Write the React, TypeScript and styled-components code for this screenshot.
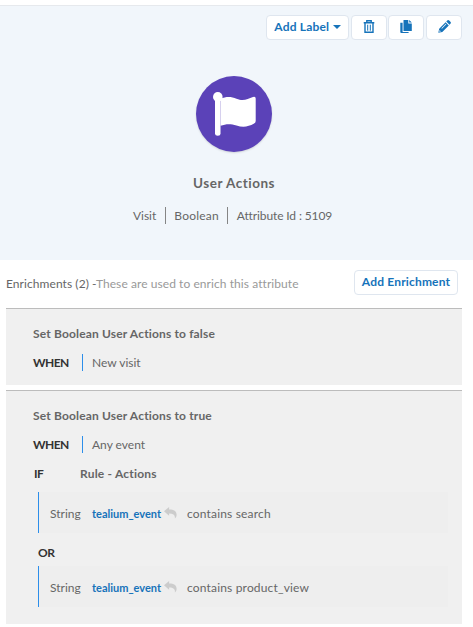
import React from "react";
import styled, { createGlobalStyle } from "styled-components";

const GlobalStyle = createGlobalStyle`
  * { box-sizing: border-box; }
  body { margin: 0; background: #fff; }
`;

const Page = styled.div`
  width: 473px;
  height: 627px;
  padding-top: 5px;
  overflow: hidden;
  background: #fff;
  color: #666;
  font: 400 12px/17px Lato, "Liberation Sans", sans-serif;
  white-space: nowrap;
`;
const Hero = styled.header`
  height: 255px;
  padding: 9px 11px 0 6px;
  background: #f1f6fb;
  border-top: 1px solid #e6e9ed;
  display: flex;
  flex-direction: column;
  align-items: center;
`;
const Toolbar = styled.div`
  align-self: flex-end;
  display: grid;
  grid-template-columns: 83px 36px 36px 36px;
  column-gap: 1.6px;
`;
const Button = styled.button`
  height: 25px;
  padding: 0 0 2px;
  display: flex;
  align-items: center;
  justify-content: center;
  gap: 4px;
  color: #1673ba;
  background: #fff;
  border: 1px solid #dfe6ef;
  border-radius: 4px;
  font: 700 12px/17px Lato, sans-serif;
  letter-spacing: 0.17px;
`;
const Avatar = styled.div`
  width: 76px;
  height: 76px;
  margin-top: 36px;
  border-radius: 50%;
  background: #5b42b8;
  box-shadow: 0 1px 2px #0002;
`;
const Title = styled.h1`
  margin: 23px 0 0;
  font-size: 13.5px;
  line-height: 17px;
  font-weight: 700;
  letter-spacing: 0.5px;
`;
const Meta = styled.div`
  display: flex;
  margin: 15px 3px 0 0;
`;
const MetaItem = styled.span<{ $tracking?: number }>`
  padding: 0 8.5px;
  letter-spacing: ${(p) => p.$tracking ?? 0}px;
  & + & { border-left: 1px solid #858585; }
`;
const SectionBar = styled.div`
  height: 48px;
  padding: 10px 15px 0 6px;
  display: flex;
  justify-content: space-between;
`;
const SectionTitle = styled.div`
  padding-top: 5px;
  letter-spacing: 0.07px;
`;
const Muted = styled.span`
  color: #999;
`;
const EnrichButton = styled(Button)`
  width: 104px;
`;
const Card = styled.section<{ $height: number }>`
  width: 456px;
  height: ${(p) => p.$height}px;
  margin: 0 0 5px 6px;
  padding: 16px 14px 0 27px;
  background: #f0f0f0;
  border-top: 1px solid #bcbcbc;
`;
const CardTitle = styled.h2`
  margin: 0 0 12px;
  font-size: 12px;
  line-height: 17px;
  font-weight: 700;
  letter-spacing: 0.16px;
`;
const Clause = styled.div`
  display: grid;
  grid-template-columns: 49px auto;
  height: 17px;
  margin-bottom: 12px;
`;
const RuleClause = styled(Clause)`
  margin-bottom: 10px;
  padding-left: 1px;
  grid-template-columns: 48px auto;
`;
const Keyword = styled.span`
  color: #333;
  font-weight: 700;
  letter-spacing: -0.55px;
`;
const Event = styled.span`
  padding-left: 9px;
  border-left: 1px solid #2c8eea;
`;
const RuleName = styled.strong`
  margin-left: -2px;
  letter-spacing: 0.2px;
`;
const Join = styled.div`
  height: 33px;
  padding: 11px 0 0 5px;
`;
const Condition = styled.div`
  height: 41px;
  margin-left: 5px;
  padding: 2px 0 0 11px;
  display: grid;
  grid-template-columns: 42px 72px 23px auto;
  align-items: center;
  background: #eee;
  border-left: 1px solid #2c8eea;
`;
const Attribute = styled.b`
  color: #1673ba;
  font-size: 11px;
  padding-bottom: 1px;
`;
const Predicate = styled.span`
  letter-spacing: 0.17px;
`;
const ReplySvg = styled.svg`
  margin-bottom: 2px;
`;

const Caret = () => <svg width="8" height="4" viewBox="0 0 8 4"><path d="M0 0h8L4 4z" fill="currentColor" /></svg>;
const Trash = () => (
  <svg width="12" height="13" viewBox="0 0 12 13" fill="none" stroke="currentColor">
    <path d="M.7 2.8h10.6M3.8 2.4V.8h4.4v1.6M2 3.3v8.9h8V3.3" strokeWidth="1.4" />
    <path d="M4.7 4.7v6M7.3 4.7v6" strokeWidth="1" />
  </svg>
);
const Copy = () => (
  <svg width="12" height="13" viewBox="0 0 12 13" fill="currentColor">
    <path d="M3.5 0h4.8v3.4h3.5V11H3.5zM9.2 0l2.6 2.6H9.2zM.3 2.7h2.3v9.2h6v1H1.2Q.3 12.9.3 12z" />
  </svg>
);
const Pencil = () => (
  <svg width="13" height="13" viewBox="0 0 13 13" fill="currentColor">
    <path d="M9.2.6q1-1 2 0l1.2 1.2q1 1 0 2l-.9.9-3.2-3.2zM7.6 2.2l3.2 3.2-6.5 6.5-4 .9.9-4zM1.6 10.1l-.3 1.6 1.6-.3zM3.4 8.2l.5.5L8.3 4.3l-.5-.5z" fillRule="evenodd" />
  </svg>
);
const Flag = () => (
  <svg width="76" height="76" viewBox="0 0 76 76" fill="#fff">
    <circle cx="21.8" cy="20.9" r="4.8" />
    <path d="M19 21h5.5v36.2q0 2.5-2.7 2.5T19 57.2z" />
    <path d="M24.5 22.7c6-2.4 11-2 16 0 7 2.8 11 .2 16.5-1.7q2.7-.9 2.7 1.6v22.4q0 1.8-1.6 2.6c-6 3.5-11.5 4-17.6 1.9-6-2-10.5-1.7-16 .2z" />
  </svg>
);
const Reply = () => (
  <ReplySvg width="13" height="12" viewBox="0 0 13 12" fill="#ccc">
    <path d="M0 4.2 5.1 0v2.5c4.8 0 7.5 1.7 7.5 5.2 0 1.6-.7 2.9-1.7 3.9.4-3.5-1.5-5-5.8-5v2.2z" />
  </ReplySvg>
);

const Rule = ({ value }: { value: string }) => (
  <Condition>
    <span>String</span>
    <Attribute>tealium_event</Attribute>
    <Reply />
    <Predicate>contains {value}</Predicate>
  </Condition>
);

export default function App() {
  return (
    <Page>
      <GlobalStyle />
      <Hero>
        <Toolbar>
          <Button>Add Label <Caret /></Button>
          <Button aria-label="Delete"><Trash /></Button>
          <Button aria-label="Duplicate"><Copy /></Button>
          <Button aria-label="Edit"><Pencil /></Button>
        </Toolbar>
        <Avatar><Flag /></Avatar>
        <Title>User Actions</Title>
        <Meta>
          <MetaItem>Visit</MetaItem>
          <MetaItem $tracking={0.2}>Boolean</MetaItem>
          <MetaItem $tracking={-0.12}>Attribute Id : 5109</MetaItem>
        </Meta>
      </Hero>
      <SectionBar>
        <SectionTitle>Enrichments (2) -<Muted>These are used to enrich this attribute</Muted></SectionTitle>
        <EnrichButton>Add Enrichment</EnrichButton>
      </SectionBar>
      <Card $height={77}>
        <CardTitle>Set Boolean User Actions to false</CardTitle>
        <Clause><Keyword>WHEN</Keyword><Event>New visit</Event></Clause>
      </Card>
      <Card $height={234}>
        <CardTitle>Set Boolean User Actions to true</CardTitle>
        <Clause><Keyword>WHEN</Keyword><Event>Any event</Event></Clause>
        <RuleClause><Keyword>IF</Keyword><RuleName>Rule - Actions</RuleName></RuleClause>
        <Rule value="search" />
        <Join><Keyword>OR</Keyword></Join>
        <Rule value="product_view" />
      </Card>
    </Page>
  );
}
